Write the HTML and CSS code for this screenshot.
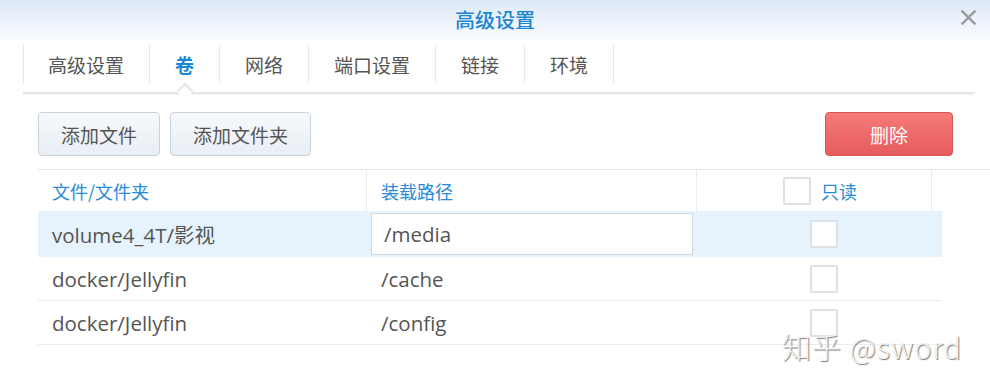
FILE: index.html
```html
<!DOCTYPE html>
<html lang="zh-CN">
<head>
    <meta charset="UTF-8">
    <title>高级设置</title>
    <link rel="stylesheet" href="styles.css">
</head>
<body>
    <div class="dialog">
        <div class="titlebar">
            <span class="title">高级设置</span>
            <button class="close-btn" aria-label="关闭">
                <svg viewBox="0 0 16 16" width="17" height="17" stroke="#9a9a9a" stroke-width="2.2" fill="none">
                    <line x1="1.5" y1="1.5" x2="14.5" y2="14.5"></line>
                    <line x1="14.5" y1="1.5" x2="1.5" y2="14.5"></line>
                </svg>
            </button>
        </div>

        <!-- Tabs -->
        <div class="tabs">
            <div class="tab">高级设置</div>
            <div class="tab active">卷</div>
            <div class="tab">网络</div>
            <div class="tab">端口设置</div>
            <div class="tab">链接</div>
            <div class="tab">环境</div>
        </div>

        <div class="toolbar">
            <button class="btn">添加文件</button>
            <button class="btn">添加文件夹</button>
            <span class="spacer"></span>
            <button class="btn btn-danger">删除</button>
        </div>

        <div class="grid">
            <div class="grid-head">
                <div class="hcell">文件/文件夹</div>
                <div class="hcell">装载路径</div>
                <div class="hcell center"><span class="checkbox"></span>只读</div>
                <div class="hcell"></div>
            </div>
            <div class="grid-row selected">
                <div class="cell">volume4_4T/影视</div>
                <div class="cell editing"><div class="edit-box">/media</div></div>
                <div class="cell center"><span class="checkbox"></span></div>
            </div>
            <div class="grid-row">
                <div class="cell">docker/Jellyfin</div>
                <div class="cell">/cache</div>
                <div class="cell center"><span class="checkbox"></span></div>
            </div>
            <div class="grid-row">
                <div class="cell">docker/Jellyfin</div>
                <div class="cell">/config</div>
                <div class="cell center"><span class="checkbox"></span></div>
            </div>
        </div>

        <div class="watermark">知乎 @sword</div>
    </div>
</body>
</html>
```

FILE: styles.css
```css
body {
    margin: 0;
    background: #ffffff;
    font-family: "Open Sans", "Noto Sans CJK SC", sans-serif;
    color: #505050;
}

.dialog {
    position: relative;
    width: 990px;
    height: 388px;
    overflow: hidden;
}

.titlebar {
    position: relative;
    height: 40px;
    display: flex;
    align-items: center;
    justify-content: center;
    background: linear-gradient(#dde9f7, #fafcff);
}

.title {
    font-family: "Noto Sans CJK SC", sans-serif;
    font-size: 20px;
    font-weight: 500;
    color: #1a86d4;
    margin-top: -2px;
}

.close-btn {
    position: absolute;
    right: 13px;
    top: 9px;
    padding: 0;
    border: 0;
    background: none;
    display: flex;
}

/* tabs */
.tabs {
    display: flex;
    margin: 5px 15px 0 23px;
    height: 47px;
    border-bottom: 2px solid #e4e7ea;
    box-shadow: 0 1px 1px rgba(0,0,0,0.04);
}

.tab {
    position: relative;
    height: 38px;
    padding: 0 25px;
    display: flex;
    align-items: center;
    border-left: 1px solid #e6e9ed;
    font-family: "Noto Sans CJK SC", sans-serif;
    font-size: 19px;
    color: #555;
}

.tab:first-child {
    padding-left: 24px;
}

.tab:last-child {
    border-right: 1px solid #e6e9ed;
}

.tab.active {
    color: #1a86d4;
    font-weight: 700;
}

.tab.active::after {
    content: "";
    position: absolute;
    left: 50%;
    bottom: -14px;
    width: 10px;
    height: 10px;
    margin-left: -6px;
    background: #fff;
    border-left: 2px solid #e4e7ea;
    border-top: 2px solid #e4e7ea;
    transform: rotate(45deg);
}

/* toolbar */
.toolbar {
    display: flex;
    gap: 10px;
    margin: 18px 37px 0 38px;
}

.spacer {
    flex: 1;
}

.btn {
    height: 44px;
    padding: 0 22px;
    border: 1px solid #c9d3dd;
    border-radius: 4px;
    background: linear-gradient(#f7f9fc, #e8eef4);
    font-family: "Noto Sans CJK SC", sans-serif;
    font-size: 19px;
    color: #555;
}

.btn-danger {
    width: 128px;
    border-color: #d95454;
    background: linear-gradient(#f57a79, #e65c5c);
    color: #fff;
}

/* grid */
.grid {
    margin: 13px 0 0 38px;
}

.grid-head {
    display: grid;
    grid-template-columns: 329px 330px 235px 27px;
    border-top: 1px solid #dfe6ee;
    height: 41px;
}

.hcell {
    display: flex;
    align-items: center;
    padding: 0 14px;
    border-right: 1px solid #e8ecf0;
    font-family: "Noto Sans CJK SC", sans-serif;
    font-size: 18px;
    color: #2a8ad6;
}

.hcell:last-child {
    border-right: 0;
}

.hcell.center {
    justify-content: center;
    padding: 0 0 0 12px;
    gap: 10px;
}

.grid-row {
    display: grid;
    grid-template-columns: 329px 330px 245px;
    height: 43px;
    border-bottom: 1px solid #e9edf1;
    width: 904px;
}

.grid-row.selected {
    height: 46px;
    background: #e6f3fd;
    border-bottom: 0;
}

.cell {
    display: flex;
    align-items: center;
    padding: 0 14px;
    font-size: 20.5px;
    color: #555;
}

.cell.center {
    justify-content: center;
    padding: 0 0 0 8px;
}

.cell.editing {
    padding: 0 4px;
}

.edit-box {
    box-sizing: border-box;
    width: 322px;
    height: 42px;
    padding: 0 12px;
    display: flex;
    align-items: center;
    background: #fff;
    border: 1px solid #cfd7e0;
}

.checkbox {
    display: inline-block;
    box-sizing: border-box;
    width: 28px;
    height: 28px;
    background: #fff;
    border: 2px solid #dde1e6;
    border-radius: 2px;
}

.watermark {
    position: absolute;
    left: 782px;
    top: 325px;
    font-family: "Noto Sans CJK SC", sans-serif;
    font-weight: 300;
    font-size: 29px;
    letter-spacing: 1px;
    color: #f2f2f2;
    text-shadow: 1px 1px 1px #7a7a7a;
}
```
